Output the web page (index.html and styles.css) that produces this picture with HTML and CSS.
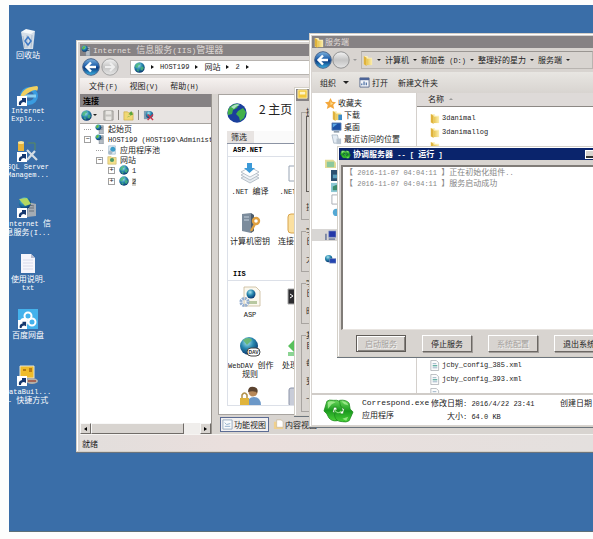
FILE: index.html
```html
<!DOCTYPE html>
<html lang="zh-CN">
<head>
    <meta charset="UTF-8">
    <meta name="viewport" content="width=device-width, initial-scale=1.0">
    <title>服务端</title>
    <link rel="stylesheet" href="styles.css">
</head>
<body>
    <!-- shared icons -->
    <svg class="defs" width="0" height="0">
        <defs>
            <radialGradient id="gGlobe" cx="40%" cy="30%" r="70%">
                <stop offset="0" stop-color="#a8e4ee"/><stop offset=".5" stop-color="#2787ae"/><stop offset="1" stop-color="#0a3870"/>
            </radialGradient>
            <linearGradient id="gBack" x1="0" y1="0" x2="0" y2="1">
                <stop offset="0" stop-color="#7fb4e0"/><stop offset=".45" stop-color="#1c5ca8"/><stop offset=".55" stop-color="#0b3a80"/><stop offset="1" stop-color="#3cb4e4"/>
            </linearGradient>
            <linearGradient id="gFwd" x1="0" y1="0" x2="0" y2="1">
                <stop offset="0" stop-color="#f4f4f4"/><stop offset=".5" stop-color="#c4c4c4"/><stop offset="1" stop-color="#e6e6e6"/>
            </linearGradient>
            <linearGradient id="gFolder" x1="0" y1="0" x2="1" y2="0">
                <stop offset="0" stop-color="#e8c44c"/><stop offset="1" stop-color="#fbeeb0"/>
            </linearGradient>
            <linearGradient id="gGreen" x1="0" y1="0" x2="0" y2="1">
                <stop offset="0" stop-color="#6ad85c"/><stop offset=".5" stop-color="#1a9a1e"/><stop offset="1" stop-color="#4ad038"/>
            </linearGradient>
        </defs>
        <symbol id="globe" viewBox="0 0 20 20">
            <circle cx="10" cy="10" r="9.5" fill="url(#gGlobe)"/>
            <path d="M3 5q4-4 7-3l1 3-3 2-1 3-3 1-2-2zM12 9l4-1 2 3-3 5-3-2zM6 13l3 1-1 4-3-3z" fill="#4cb878" opacity=".8"/>
        </symbol>
        <symbol id="earth" viewBox="0 0 20 20">
            <circle cx="10" cy="10" r="9.7" fill="#1a3f9c"/>
            <path d="M3 4q4-4 9-3l-2 4-4 2-1 4-4 1q-1-5 2-8zM11 8l5-3 3 4-2 6-4 3-1-4-3-3z" fill="#42b04a"/>
            <path d="M4 4q5-4 9-2q-4 1-6 4z" fill="#d8f4f8" opacity=".7"/>
        </symbol>
        <symbol id="back" viewBox="0 0 18 18">
            <circle cx="9" cy="9" r="8.3" fill="url(#gBack)" stroke="#47648c" stroke-width="1"/>
            <path d="M14 9H5M9 4.5L4.5 9L9 13.5" fill="none" stroke="#fff" stroke-width="2.4"/>
        </symbol>
        <symbol id="forward" viewBox="0 0 18 18">
            <circle cx="9" cy="9" r="8.2" fill="url(#gFwd)" stroke="#a2a2a2" stroke-width="1"/>
            <path d="M4 9h9M9 5l4 4-4 4" fill="none" stroke="#eee" stroke-width="2"/>
        </symbol>
        <symbol id="round" viewBox="0 0 18 18">
            <circle cx="9" cy="9" r="8.2" fill="url(#gFwd)" stroke="#929292" stroke-width="1"/>
        </symbol>
        <symbol id="folder" viewBox="0 0 12 12">
            <path d="M2 1h4l1 2h4v8H2z" fill="#fbf0bc"/>
            <path d="M2 1l3 2v9l-3-2z" fill="#dfb23c"/>
            <path d="M5 4h6v7H5z" fill="url(#gFolder)"/>
        </symbol>
        <symbol id="server" viewBox="0 0 12 12">
            <path d="M5 2h5v10H5z" fill="#b4bcc4" stroke="#6c7884" stroke-width=".6"/>
            <path d="M6 4h3M6 6h3" stroke="#52606c"/>
            <circle cx="4" cy="4" r="3.4" fill="url(#gGlobe)"/>
            <path d="M1 4l2-3 2 1-2 3z" fill="#62b840"/>
        </symbol>
        <symbol id="sync" viewBox="0 0 32 28">
            <path d="M1 14L4 4q2-2 7-1 7-1 8 5l1 6-5 1-1-5-3 0-1 5 4 3 1 6q-6 1-9-3l-2-4z" fill="url(#gGreen)" stroke="#1c8a1c" stroke-width=".8"/>
            <path d="M31 15l-4 9q-3 2-7 1-7 0-8-6l0-6 5 0 1 4 3 0 1-5-4-3-1-6q7-1 10 3l1 6z" fill="url(#gGreen)" stroke="#1c8a1c" stroke-width=".8"/>
            <path d="M5 5q3-2 8 0l-4 2-4 5zM19 4q6 0 7 4l-4-1zM20 22l6-2-2 4z" fill="#b4f4a0" opacity=".7"/>
            <path d="M12 13q3 5 7 1" fill="none" stroke="#8ce07c" stroke-width="1.2"/>
        </symbol>
        <symbol id="doc" viewBox="0 0 12 12">
            <path d="M2 .5h6l2.500 2.500v8.500H2z" fill="#fcfcfc" stroke="#9a9ea4" stroke-width=".7"/>
            <path d="M4 4h4M4 8.500h5" stroke="#7a98b4" stroke-width=".8"/>
            <path d="M4 6.300h5" stroke="#3c9a8c" stroke-width="1.200"/>
        </symbol>
        <symbol id="monitor" viewBox="0 0 12 12">
            <path d="M1 1h10v8H1z" fill="#1c50a4" stroke="#6c8cb4" stroke-width=".8"/>
            <path d="M2 2h5L2 6z" fill="#5ca8e4"/><path d="M3 10h6v1.500H3z" fill="#7c8c9c"/>
        </symbol>
        <symbol id="shortcut" viewBox="0 0 10 10">
            <path d="M0 0h10v10H0z" fill="#fff"/>
            <path d="M2 9q-1-4 3-5V2l4 0v5L7 6q-3 0-3 3z" fill="#16386e"/>
        </symbol>
        <symbol id="stack" viewBox="0 0 22 22">
            <path d="M2 16l9-5 9 5-9 5z" fill="#e6ebef" stroke="#a0acb8" stroke-width=".7"/>
            <path d="M2 13l9-5 9 5-9 5z" fill="#f2f5f8" stroke="#a0acb8" stroke-width=".7"/>
            <path d="M2 10l9-5 9 5-9 5z" fill="#fff" stroke="#a0acb8" stroke-width=".7"/>
            <path d="M8 1h5v5h3l-5.500 5L5 6h3z" fill="#3c9ad8"/>
        </symbol>
    </svg>

    <main class="desktop">
        <ul class="shortcuts">
            <li>
                <svg viewBox="0 0 22 22"><path d="M4 4l14-1-2 18-9 0z" fill="#d4dee8"/><path d="M4 4l5-3 9 2-4 3z" fill="#f4f8fa"/><path d="M6 8l2 12M10 7v13M15 7l-1 13" stroke="#a2b4c8" stroke-width=".8"/><path d="M8 13l3-4 3 4-3 4z" fill="none" stroke="#3c78c4" stroke-width="1.500"/></svg>
                <span>回收站</span>
            </li>
            <li>
                <svg viewBox="0 0 22 22"><circle cx="12" cy="12" r="7" fill="none" stroke="#3a9ce0" stroke-width="4"/><path d="M7 12h12" stroke="#8cd0f0" stroke-width="3"/><path d="M3 15Q4 3 20 2q2 1 0 5Q18 3 3 15z" fill="#f0d060"/><use href="#shortcut" x="0" y="12" width="10" height="10"/></svg>
                <span class="en">Internet<br>Explo...</span>
            </li>
            <li>
                <svg viewBox="0 0 22 22"><path d="M1 2h6v9H1z" fill="#e8b43c"/><ellipse cx="4" cy="2.500" rx="3" ry="1.500" fill="#fae49c"/><path d="M11 3h7v7" fill="none" stroke="#5a8a58"/><path d="M10 20l8-9M10 10l10 10" stroke="#d4dce4" stroke-width="2.200"/><use href="#shortcut" x="0" y="12" width="10" height="10"/></svg>
                <span class="en">SQL Server<br>Managem...</span>
            </li>
            <li>
                <svg viewBox="0 0 22 22"><path d="M11 6l8 2v12l-9 1z" fill="#a4acb4"/><path d="M12 9l5 1M12 12h5M12 15h5" stroke="#687078"/><circle cx="8" cy="7" r="6" fill="url(#gGlobe)"/><path d="M2 3l8-1 4 6-6 2z" fill="#b4d860"/><use href="#shortcut" x="0" y="12" width="10" height="10"/></svg>
                <span><span class="en">Internet </span>信<br>息服务<span class="en">(I...</span></span>
            </li>
            <li>
                <svg viewBox="0 0 22 22"><path d="M4 2h10l4 4v15H4z" fill="#f6f6fc"/><path d="M14 2v4h4z" fill="#b8bcd0"/><path d="M6 8h10M6 11h10M6 14h10M6 17h10" stroke="#d8daea"/></svg>
                <span>使用说明.<br><span class="en">txt</span></span>
            </li>
            <li>
                <svg viewBox="0 0 22 22"><path d="M1 1h20v20H1z" fill="#44b2ec"/><circle cx="11" cy="8" r="3.500" fill="none" stroke="#fff" stroke-width="2"/><circle cx="15" cy="14" r="3.500" fill="none" stroke="#fff" stroke-width="2"/><circle cx="7" cy="14" r="3" fill="none" stroke="#fff" stroke-width="2"/><use href="#shortcut" x="1" y="12" width="9" height="9"/></svg>
                <span>百度网盘</span>
            </li>
            <li>
                <svg viewBox="0 0 22 22"><path d="M3 2h14v12H3z" fill="#f0bc28" stroke="#e8e4d0"/><path d="M6 5h3v2H6zM12 4h3v4h-3z" fill="#b87c14"/><ellipse cx="15" cy="17" rx="6" ry="3" fill="#b4b0a8"/><path d="M11 17h8" stroke="#a04c3c" stroke-width="1.500"/><use href="#shortcut" x="0" y="12" width="10" height="10"/></svg>
                <span><span class="en">DataBuil...</span><br><span class="en">- </span>快捷方式</span>
            </li>
        </ul>

        <!-- IIS manager -->
        <section class="window iis">
            <header class="titlebar">
                <svg class="ico"><use href="#server"/></svg>
                <h1><span class="en">Internet </span>信息服务<span class="en">(IIS)</span>管理器</h1>
            </header>
            <div class="iis-nav">
                <button class="nav-btn" aria-label="后退"><svg><use href="#back"/></svg></button>
                <button class="nav-btn" aria-label="前进"><svg><use href="#forward"/></svg></button>
                <nav class="crumbs">
                    <svg class="ico"><use href="#globe"/></svg>
                    <i class="arrow"></i><a href="#" class="en">HOST199</a>
                    <i class="arrow"></i><a href="#">网站</a>
                    <i class="arrow"></i><a href="#" class="en">2</a>
                    <i class="arrow"></i>
                </nav>
            </div>
            <div class="menubar">
                <button>文件<span class="en">(F)</span></button>
                <button>视图<span class="en">(V)</span></button>
                <button>帮助<span class="en">(H)</span></button>
            </div>
            <div class="iis-body">
                <aside class="connections">
                    <h2>连接</h2>
                    <div class="tools">
                        <button aria-label="连接"><svg class="ico"><use href="#globe"/></svg></button>
                        <i class="caret"></i>
                        <button aria-label="保存"><svg class="ico" viewBox="0 0 12 12"><path d="M1 1h10v10H1z" fill="#c6c4c0" stroke="#9a9894"/><path d="M3 1h6v4H3zM3 7h6v4H3z" fill="#e8e6e2"/></svg></button>
                        <i class="bar"></i>
                        <button aria-label="向上"><svg class="ico" viewBox="0 0 12 12"><path d="M1 2h4l1 1h5v8H1z" fill="#f0d874" stroke="#c8a848" stroke-width=".7"/><path d="M4 8q4 0 4-3l-2 0 3-4 2 4" fill="#58a43c"/></svg></button>
                        <i class="bar"></i>
                        <button aria-label="断开"><svg class="ico" viewBox="0 0 12 12"><path d="M1 1h5v9H1z" fill="#7c9cb4"/><circle cx="7" cy="5" r="4" fill="url(#gGlobe)"/><path d="M5 5l6 6M11 5l-6 6" stroke="#c8344c" stroke-width="1.500"/></svg></button>
                    </div>
                    <div class="tree">
                        <ul>
                            <li><i class="dots"></i><svg class="ico"><use href="#server"/></svg>起始页</li>
                            <li>
                                <i class="box">−</i><svg class="ico"><use href="#server"/></svg><span class="en">HOST199 (HOST199\Administr</span>
                                <ul>
                                    <li><i class="dots"></i><svg class="ico" viewBox="0 0 12 12"><path d="M2 1h8v10H2z" fill="#e4ecf2" stroke="#8cacc4" stroke-width=".7"/><circle cx="7" cy="5" r="3" fill="#3c9cc8"/><circle cx="4" cy="9" r="2.500" fill="#a8b8c4"/></svg>应用程序池</li>
                                    <li>
                                        <i class="box">−</i><svg class="ico" viewBox="0 0 12 12"><path d="M1 2h4l1 1h5v8H1z" fill="#f4e08c" stroke="#c8b060" stroke-width=".7"/><circle cx="6" cy="6" r="2.500" fill="#4c9868"/></svg>网站
                                        <ul>
                                            <li><i class="box">+</i><svg class="ico"><use href="#globe"/></svg><span class="en">1</span></li>
                                            <li><i class="box">+</i><svg class="ico"><use href="#globe"/></svg><span class="en picked">2</span></li>
                                        </ul>
                                    </li>
                                </ul>
                            </li>
                        </ul>
                    </div>
                    <div class="scrollbar">
                        <button class="left" aria-label="向左"></button>
                        <span class="thumb"></span>
                        <button class="right" aria-label="向右"></button>
                    </div>
                </aside>
                <div class="content">
                    <div class="features">
                        <div class="hero">
                            <svg><use href="#earth"/></svg>
                            <h2>2 主页</h2>
                        </div>
                        <div class="filter"><span>筛选</span></div>
                        <div class="groups">
                            <h3 class="en">ASP.NET</h3>
                            <div class="icons">
                                <figure><svg><use href="#stack"/></svg><figcaption><span class="en">.NET </span>编译</figcaption></figure>
                                <figure><svg viewBox="0 0 22 22"><path d="M2 4h16v15H2z" fill="#fff" stroke="#98a4b4"/></svg><figcaption><span class="en">.NET </span>页面</figcaption></figure>
                                <figure><svg viewBox="0 0 22 22"><path d="M3 2l9-1v20l-9-2z" fill="#7c8c9c"/><path d="M12 1l3 2v16l-3 2z" fill="#4c5c6c"/><path d="M5 5h5M5 8h5" stroke="#c4d0dc"/><circle cx="17" cy="9" r="3" fill="none" stroke="#e0a040" stroke-width="2.400"/><path d="M16 12l-4 7" stroke="#e0a040" stroke-width="2.400"/></svg><figcaption>计算机密钥</figcaption></figure>
                                <figure><svg viewBox="0 0 22 22"><rect x="1" y="2" width="17" height="19" rx="3" fill="#fbe0a0" stroke="#d8a44c"/></svg><figcaption>连接字符串</figcaption></figure>
                            </div>
                            <h3 class="en">IIS</h3>
                            <div class="icons">
                                <figure><svg viewBox="0 0 22 22"><path d="M5 1h12l4 4v15H5z" fill="#fbf8ee" stroke="#c8b898" stroke-width=".8"/><circle cx="12" cy="8" r="4.500" fill="url(#gGlobe)"/><path d="M10 15h8v3h-8z" fill="#b8c8a0"/><circle cx="5.500" cy="16" r="3.600" fill="none" stroke="#94aed0" stroke-width="3" stroke-dasharray="2 .8"/></svg><figcaption class="en">ASP</figcaption></figure>
                                <figure><svg viewBox="0 0 22 22"><path d="M1 3h19v15H1z" fill="#2c2c30" stroke="#a8a8a8"/><path d="M3 8l3 2-3 2" stroke="#fff" fill="none"/></svg></figure>
                                <figure><svg viewBox="0 0 22 22"><circle cx="10" cy="10" r="9" fill="url(#gGlobe)"/><path d="M4 4q6-4 9 0l-5 5z" fill="#68b878"/><rect x="8" y="12" width="13" height="8" rx="4" fill="#fff" stroke="#444"/><text x="14.500" y="18" text-anchor="middle" class="dav">DAV</text></svg><figcaption><span class="en">WebDAV </span>创作<br>规则</figcaption></figure>
                                <figure><svg viewBox="0 0 22 22"><path d="M1 10l6-6v4h6v5H7v3z" fill="#58c05c"/><path d="M1 16h9v4H1z" fill="#8cd494"/></svg><figcaption>处理程序</figcaption></figure>
                                <figure><svg viewBox="0 0 22 22"><circle cx="14" cy="6" r="4.500" fill="#b88858"/><path d="M9 6q0-6 6-5 5 1 3 6-3-3-9-1z" fill="#5c4430"/><path d="M8 20q0-9 7-9t7 9z" fill="#6c98c8"/><path d="M1 12h9v9H1z" fill="#e0b43c"/><path d="M3 12V9q2.500-4 5 0v3" fill="none" stroke="#b09048" stroke-width="1.500"/></svg></figure>
                                <figure><svg viewBox="0 0 22 22"><rect x="2" y="2" width="16" height="18" rx="2" fill="#c8ccd8" stroke="#8c94a8"/></svg></figure>
                            </div>
                        </div>
                    </div>
                    <div class="views">
                        <button class="active"><svg class="ico" viewBox="0 0 12 12"><path d="M1 1h10v10H1z" fill="#f8fafc" stroke="#94a8c0"/><path d="M3 4l2 2 4-1M3 8h6" stroke="#8cacc8" fill="none"/></svg>功能视图</button>
                        <button><svg class="ico" viewBox="0 0 12 12"><path d="M1 3h5l1 1h4v7H1z" fill="#f0d08c"/><path d="M4 1h5l2 2v6H4z" fill="#fff" stroke="#c8b490" stroke-width=".7"/></svg>内容视图</button>
                    </div>
                </div>
            </div>
            <footer class="statusbar">就绪</footer>
        </section>

        <!-- dialog mostly covered by the explorer window -->
        <section class="window settings">
            <header><svg class="ico" viewBox="0 0 12 12"><path d="M1 1h10v9H1z" fill="#f4c83c" stroke="#fff0b0"/><path d="M3 3h6v3H3z" fill="#fff4c4"/></svg></header>
            <fieldset class="g1"><legend>操</legend><div class="list"></div><p>技</p></fieldset>
            <fieldset><legend>字</legend><p>日</p><p>大</p></fieldset>
            <fieldset><legend>字</legend><p>日</p><p>时</p></fieldset>
            <fieldset><legend>其</legend><p>自</p><p>每</p><p>到</p><p>卡</p></fieldset>
        </section>

        <!-- file explorer -->
        <section class="window explorer">
            <header class="titlebar">
                <svg class="ico"><use href="#folder"/></svg>
                <h1>服务端</h1>
            </header>
            <div class="exp-nav">
                <button class="nav-btn" aria-label="后退"><svg><use href="#back"/></svg></button>
                <button class="nav-btn" aria-label="前进"><svg><use href="#round"/></svg></button>
                <i class="caret pale"></i>
                <nav class="crumbs">
                    <svg class="ico"><use href="#folder"/></svg>
                    <i class="caret"></i><a href="#">计算机</a>
                    <i class="caret"></i><a href="#">新加卷<span class="en"> (D:)</span></a>
                    <i class="caret"></i><a href="#">整理好的星力</a>
                    <i class="caret"></i><a href="#">服务端</a>
                    <i class="caret"></i>
                </nav>
            </div>
            <div class="commands">
                <button>组织 <i class="caret big"></i></button>
                <button><svg class="ico" viewBox="0 0 12 12"><path d="M1 1h10v10H1z" fill="#f4f6fa" stroke="#5c6c8c"/><path d="M1 1h10v2.500H1z" fill="#4c6498"/><path d="M3 9V7M5.500 9V5M8 9V6" stroke="#5c7cac" stroke-width="1.500"/></svg>打开</button>
                <button>新建文件夹</button>
            </div>
            <div class="exp-body">
                <ul class="places">
                    <li><svg class="ico" viewBox="0 0 12 12"><path d="M6 0l2 4 4 .5-3 3 1 4.500-4-2.300L2 12l1-4.500-3-3L4 4z" fill="#f4a83c"/><path d="M6 3l1 2 2 1-3 2z" fill="#fcdc8c"/></svg>收藏夹</li>
                    <li class="sub"><svg class="ico" viewBox="0 0 12 12"><use href="#folder" width="12" height="12"/><path d="M8 5h4v6H8z" fill="#3c8cc8"/></svg>下载</li>
                    <li class="sub"><svg class="ico"><use href="#monitor"/></svg>桌面</li>
                    <li class="sub"><svg class="ico" viewBox="0 0 12 12"><path d="M1 1h6l2 9H3z" fill="#e4ecf4" stroke="#94a4b4" stroke-width=".7"/><path d="M6 5h5v6H6z" fill="#b8c4d0"/></svg>最近访问的位置</li>
                    <li></li>
                    <li><svg class="ico" viewBox="0 0 12 12"><path d="M0 2h9l3 3v6H0z" fill="#e4dc94"/><path d="M2 4h8v6H2z" fill="#8cc89c"/></svg></li>
                    <li class="sub"><svg class="ico" viewBox="0 0 12 12"><path d="M0 0h12v12H0z" fill="#2c5070"/><path d="M2 5h8v4H2z" fill="#5ca0bc"/></svg></li>
                    <li class="sub"><svg class="ico" viewBox="0 0 12 12"><path d="M0 1h12v10H0z" fill="#8cc8d4"/><path d="M2 5l4-2 4 6H2z" fill="#3c8c6c"/></svg></li>
                    <li class="sub"><svg class="ico" viewBox="0 0 12 12"><path d="M1 1h10v10H1z" fill="#fff" stroke="#a4a8b0"/></svg></li>
                    <li class="sub"><svg class="ico" viewBox="0 0 12 12"><circle cx="6" cy="7" r="4" fill="#54a8d4"/></svg></li>
                    <li></li>
                    <li class="current"><svg class="ico" viewBox="0 0 12 12"><path d="M4 1h8v7H4z" fill="#2438a8" stroke="#98a8c8" stroke-width=".7"/><path d="M0 4h2v7H0zM4 9h7v2H4z" fill="#7c88a4"/></svg></li>
                    <li></li>
                    <li><svg class="ico" viewBox="0 0 12 12"><circle cx="4" cy="5" r="4" fill="url(#gGlobe)"/><path d="M5 5h7v5H5z" fill="#2444b0" stroke="#8c9cc0" stroke-width=".6"/></svg></li>
                </ul>
                <div class="files">
                    <div class="col-head">名称<i class="sort"></i></div>
                    <div class="rows">
                        <ul>
                            <li><svg class="ico"><use href="#folder"/></svg><span class="en">3danimal</span></li>
                            <li><svg class="ico"><use href="#folder"/></svg><span class="en">3danimallog</span></li>
                            <li><svg class="ico"><use href="#folder"/></svg></li>
                        </ul>
                        <ul class="tail">
                            <li><svg class="ico"><use href="#doc"/></svg><span class="en">jcby_config_385.xml</span></li>
                            <li><svg class="ico"><use href="#doc"/></svg><span class="en">jcby_config_393.xml</span></li>
                            <li><svg class="ico"><use href="#doc"/></svg></li>
                        </ul>
                    </div>
                </div>
            </div>
            <footer class="details">
                <svg><use href="#sync"/></svg>
                <dl>
                    <div><dt class="name">Correspond.exe</dt><dd>应用程序</dd></div>
                    <div class="meta">
                        <dt>修改日期<span class="en">: 2016/4/22 23:41</span></dt>
                        <dd>大小<span class="en">: 64.0 KB</span></dd>
                    </div>
                    <div><dt>创建日期</dt></div>
                </dl>
            </footer>
        </section>

        <!-- coordination server -->
        <section class="window server">
            <header class="titlebar">
                <svg class="ico"><use href="#sync"/></svg>
                <h1>协调服务器<span class="en"> -- [ </span>运行<span class="en"> ]</span></h1>
                <button class="min" aria-label="最小化"></button>
            </header>
            <div class="log" role="log">
                <p>【<span class="en"> 2016-11-07 04:04:11 </span>】正在初始化组件<span class="en">..</span></p>
                <p>【<span class="en"> 2016-11-07 04:04:11 </span>】服务启动成功</p>
            </div>
            <div class="actions">
                <button class="default" disabled>启动服务</button>
                <button>停止服务</button>
                <button disabled>系统配置</button>
                <button>退出系统</button>
            </div>
        </section>
    </main>
</body>
</html>
```

FILE: styles.css
```css
*{
    box-sizing: border-box;
}
body{
    margin: 0;
    padding: 5px 0 7px 9px;
    height: 100vh;
    background-color: #fdfefd;
    font-family: "Noto Sans CJK SC", "Liberation Sans", sans-serif;
    font-size: 8px;
    line-height: 10px;
    color: #222;
}
h1, h2, h3, p, ul, dl, dd, figure, fieldset{
    margin: 0;
    padding: 0;
}
ul{
    list-style: none;
}
a{
    color: inherit;
    text-decoration: none;
}
button{
    font: inherit;
    color: inherit;
    background: none;
    border: 0;
    padding: 0;
    white-space: nowrap;
}
.defs{
    position: absolute;
}
.en{
    font-family: "Liberation Mono", monospace;
    font-size: 7px;
    white-space: pre;
}
.ico{
    width: 11px;
    height: 11px;
    flex: none;
}
.desktop{
    position: relative;
    height: 100%;
    background-color: #3a6ea8;
    border-bottom: 1px solid #5c7078;
    overflow: hidden;
}

/* desktop icons */
.shortcuts{
    width: 56px;
    margin-left: -9px;
    padding-top: 23px;
}
.shortcuts li{
    height: 56px;
    display: flex;
    flex-direction: column;
    align-items: center;
    gap: 1px;
    color: #fff;
    line-height: 8px;
    text-align: center;
    white-space: nowrap;
}
.shortcuts svg{
    width: 22px;
    height: 22px;
    flex: none;
}

/* windows */
.window{
    position: absolute;
    background-color: #d8d4d0;
    border: 1px solid #d4d0c8;
    border-right: 0;
    box-shadow: inset 1px 1px #fff, 0 1px #6c747c;
    overflow: hidden;
}
.titlebar{
    display: flex;
    align-items: center;
    gap: 1px;
    height: 12px;
    padding-left: 1px;
    background-color: #868284;
    color: #e0dcd8;
}
.titlebar h1{
    font-size: 8px;
    font-weight: normal;
    white-space: nowrap;
}
.nav-btn{
    width: 18px;
    height: 18px;
}
.nav-btn svg{
    display: block;
    width: 18px;
    height: 18px;
}
.crumbs{
    flex: 1;
    display: flex;
    align-items: center;
    white-space: nowrap;
}
.arrow{
    border: 2px solid transparent;
    border-left: 3px solid #111;
    border-right: 0;
}
.caret{
    border: 2px solid transparent;
    border-top-color: #222;
    border-bottom: 0;
}
.caret.big{
    display: inline-block;
    vertical-align: middle;
    border-width: 3px 3px 0;
    margin-left: 5px;
}
.caret.pale{
    border-top-color: #999;
}

.iis{
    left: 67px;
    top: 35px;
    right: 0;
    padding: 3px 0 0 3px;
}
.iis .titlebar h1{
    font-size: 9px;
}
.iis .titlebar .en{
    font-size: 8px;
}
.iis-nav{
    display: flex;
    align-items: center;
    gap: 1px;
    height: 22px;
    padding-left: 2px;
    background-color: #dcd8d6;
}
.iis-nav .crumbs{
    height: 15px;
    margin-left: 10px;
    padding-left: 3px;
    gap: 6px;
    background-color: #fff;
    border: 1px solid #b8b4b0;
}
.menubar{
    display: flex;
    gap: 12px;
    height: 16px;
    padding-left: 9px;
    background: linear-gradient(#f6f2f0, #e2dcda);
}
.iis-body{
    display: flex;
    gap: 6px;
    height: 340px;
}
.connections{
    flex: none;
    width: 132px;
    display: flex;
    flex-direction: column;
    border-right: 1px solid #98948f;
}
.connections h2{
    height: 13px;
    line-height: 13px;
    padding-left: 3px;
    background-color: #868284;
    font-size: 8px;
    color: #000;
}
.tools{
    display: flex;
    align-items: center;
    gap: 4px;
    height: 16px;
    padding-left: 1px;
    background-color: #e8e4e2;
}
.tools .caret{
    margin: 0 2px 0 -3px;
}
.tools svg{
    display: block;
}
.bar{
    width: 1px;
    height: 10px;
    background-color: #8c8884;
}
.tree{
    flex: 1;
    padding-left: 4px;
    background-color: #fff;
    border-top: 1px solid #a8a4a0;
    overflow: hidden;
    white-space: nowrap;
}
.tree ul ul{
    padding-left: 12px;
}
.tree .ico{
    width: 10px;
    height: 10px;
    margin: 0 3px;
    vertical-align: top;
}
.tree .box, .tree .dots{
    display: inline-block;
    width: 7px;
    height: 7px;
    margin: 2px 1px 1px 0;
    vertical-align: top;
    font: 7px/5px "Liberation Mono", monospace;
    text-align: center;
}
.tree .box{
    border: 1px solid #a0a0a0;
}
.tree .dots{
    height: 4px;
    border-bottom: 1px dotted #a0a0a0;
}
.picked{
    background-color: #d4d0c8;
}
.scrollbar{
    display: flex;
    height: 11px;
    background-color: #f0eeec;
}
.scrollbar button, .thumb{
    width: 11px;
    background-color: #d8d4d0;
    border: 1px solid #f8f8f8;
    border-right-color: #706c68;
    border-bottom-color: #706c68;
}
.scrollbar .thumb{
    width: 93px;
    margin-right: auto;
}
.scrollbar button::before{
    content: "";
    display: block;
    width: 0;
    margin: auto;
    border: 2px solid transparent;
}
.scrollbar .left::before{
    border-right: 3px solid #000;
    border-left: 0;
}
.scrollbar .right::before{
    border-left: 3px solid #000;
    border-right: 0;
}
.content{
    flex: 1;
    min-width: 0;
    display: flex;
    flex-direction: column;
}
.features{
    flex: 1;
    min-height: 0;
    display: flex;
    flex-direction: column;
    padding: 0 8px 8px;
    background-color: #fff;
    border: 1px solid #a8a4a0;
}
.hero{
    flex: none;
    display: flex;
    align-items: center;
    gap: 12px;
    height: 36px;
}
.hero svg{
    width: 20px;
    height: 20px;
}
.hero h2{
    font-size: 12px;
    font-weight: normal;
    line-height: 12px;
    padding-bottom: 8px;
}
.filter{
    flex: none;
    height: 13px;
    border-bottom: 1px solid #8c94a4;
    background-color: #fafafa;
}
.filter span{
    display: inline-block;
    padding: 1px 7px 1px 4px;
    background-color: #e8e4e2;
}
.groups{
    flex: 1;
    min-height: 0;
    border: 1px solid #dce0e8;
    border-top: 0;
    overflow: hidden;
}
.groups h3{
    height: 13px;
    padding-left: 5px;
    line-height: 13px;
    border-bottom: 1px solid #dce0e8;
    color: #000;
}
.icons{
    display: grid;
    grid-template-columns: 44px 44px;
    grid-auto-rows: 50px;
    gap: 0 4px;
}
.icons + h3{
    margin-top: 11px;
}
.icons figure{
    padding-top: 5px;
    text-align: center;
    line-height: 8px;
    white-space: nowrap;
}
.icons svg{
    display: block;
    width: 22px;
    height: 22px;
    margin: 0 auto 3px;
}
.dav{
    font: bold 5px "Liberation Sans", sans-serif;
    fill: #333;
}
.views{
    display: flex;
    gap: 3px;
    height: 19px;
    padding: 2px 0 2px 2px;
}
.views button{
    display: flex;
    align-items: center;
    gap: 1px;
    padding: 0 2px 0 1px;
}
.views .active{
    background-color: #f2f0f0;
    border: 1px solid #5c6c94;
}
.statusbar{
    height: 17px;
    padding: 4px 0 0 2px;
    background: linear-gradient(90deg, #e2dedc, #eadfdd 30%, #e4e0de);
    border-top: 1px solid #f6f4f2;
}

.settings{
    left: 285px;
    top: 82px;
    width: 16px;
    height: 329px;
    padding: 1px 0 0 1px;
}
.settings header{
    height: 12px;
    padding-left: 1px;
    background-color: #868284;
}
.settings fieldset{
    margin: 7px 0 0 5px;
    padding-left: 4px;
    border: 1px solid #a8a4a0;
    border-right: 0;
    line-height: 8px;
    min-width: 0;
}
.settings legend{
    padding: 0;
    height: 8px;
    line-height: 8px;
}
.settings .list{
    height: 76px;
    margin-bottom: 11px;
    border: 1px solid #605c58;
    background-color: #d8d4d0;
}
.settings p{
    padding: 2px 0 8px;
}
.settings .g1 p{
    padding-top: 0;
}

.explorer{
    left: 300px;
    top: 28px;
    right: 0;
    padding: 2px 0 1px 2px;
}
.exp-nav{
    display: flex;
    align-items: center;
    height: 24px;
    padding-left: 2px;
}
.exp-nav .caret.pale{
    margin: 0 4px 0 3px;
}
.exp-nav .crumbs{
    height: 18px;
    padding-left: 0;
    gap: 4px;
    border: 1px solid #b8b4b0;
    border-top-color: #9a9692;
}
.commands{
    display: flex;
    align-items: center;
    gap: 10px;
    height: 21px;
    padding-left: 8px;
    background: linear-gradient(#e8e6e2, #d8d4d0);
}
.commands button{
    display: flex;
    align-items: center;
    gap: 2px;
}
.exp-body{
    display: flex;
    height: 300px;
    background-color: #fff;
}
.places{
    flex: none;
    width: 105px;
    padding-top: 4px;
    border-right: 1px solid #d4d0cc;
}
.places li{
    display: flex;
    align-items: center;
    gap: 2px;
    height: 12px;
    padding-left: 13px;
}
.places li.sub{
    padding-left: 19px;
}
.places .current{
    background-color: #d8d6d4;
}
.files{
    flex: 1;
    min-width: 0;
    display: flex;
    flex-direction: column;
}
.col-head{
    flex: none;
    height: 14px;
    padding: 1px 0 0 11px;
    background-color: #dedad8;
    border-bottom: 1px solid #8c8884;
}
.sort{
    display: inline-block;
    margin: 0 0 2px 5px;
    border: 2px solid transparent;
    border-bottom-color: #999;
    border-top: 0;
}
.rows{
    flex: 1;
    min-height: 0;
    display: flex;
    flex-direction: column;
    justify-content: space-between;
    padding: 4px 0 0 12px;
    overflow: hidden;
}
.rows li{
    display: flex;
    align-items: center;
    gap: 2px;
    height: 14px;
}
.tail{
    margin-bottom: -7px;
}
.details{
    display: flex;
    align-items: flex-start;
    gap: 8px;
    padding: 2px 0 0 11px;
    background-color: #fff;
    border-top: 2px solid #d0ccc8;
}
.details > svg{
    width: 31px;
    height: 28px;
    flex: none;
}
.details dl{
    flex: 1;
    display: flex;
    line-height: 12px;
    white-space: nowrap;
}
.name{
    width: 69px;
    font-family: "Liberation Mono", monospace;
}
.meta{
    width: 129px;
}
.meta dd{
    padding-left: 16px;
}

.server{
    left: 328px;
    top: 141px;
    right: 0;
    padding: 1px 0 0 1px;
}
.server .titlebar{
    background-color: #0a246c;
    color: #fff;
}
.server .titlebar h1{
    flex: 1;
    font-weight: bold;
}
.server .titlebar .ico{
    margin-right: 1px;
}
.min{
    width: 8px;
    height: 9px;
    background-color: #d8d4d0;
    border: 1px solid #fff;
    border-right: 0;
    box-shadow: inset 0 -2px #333;
}
.log{
    height: 165px;
    margin: 5px 0 0 2px;
    padding: 0 0 0 2px;
    background-color: #fff;
    border: 2px solid #807c78;
    border-right: 0;
    border-bottom: 1px solid #e8e4e0;
    color: #868686;
}
.actions{
    display: flex;
    gap: 16px;
    padding: 5px 0 4px 17px;
}
.actions button{
    flex: none;
    width: 50px;
    height: 17px;
    background-color: #d8d4d0;
    border: 1px solid #fff;
    border-right-color: #6c6864;
    border-bottom-color: #6c6864;
    box-shadow: 1px 1px #a09c98;
}
.actions button:disabled{
    color: #a4a09c;
    text-shadow: 1px 1px #f4f4f4;
}
.actions .default{
    border-color: #605c58;
    box-shadow: inset 1px 1px #fff, inset -1px -1px #888480;
}
```
